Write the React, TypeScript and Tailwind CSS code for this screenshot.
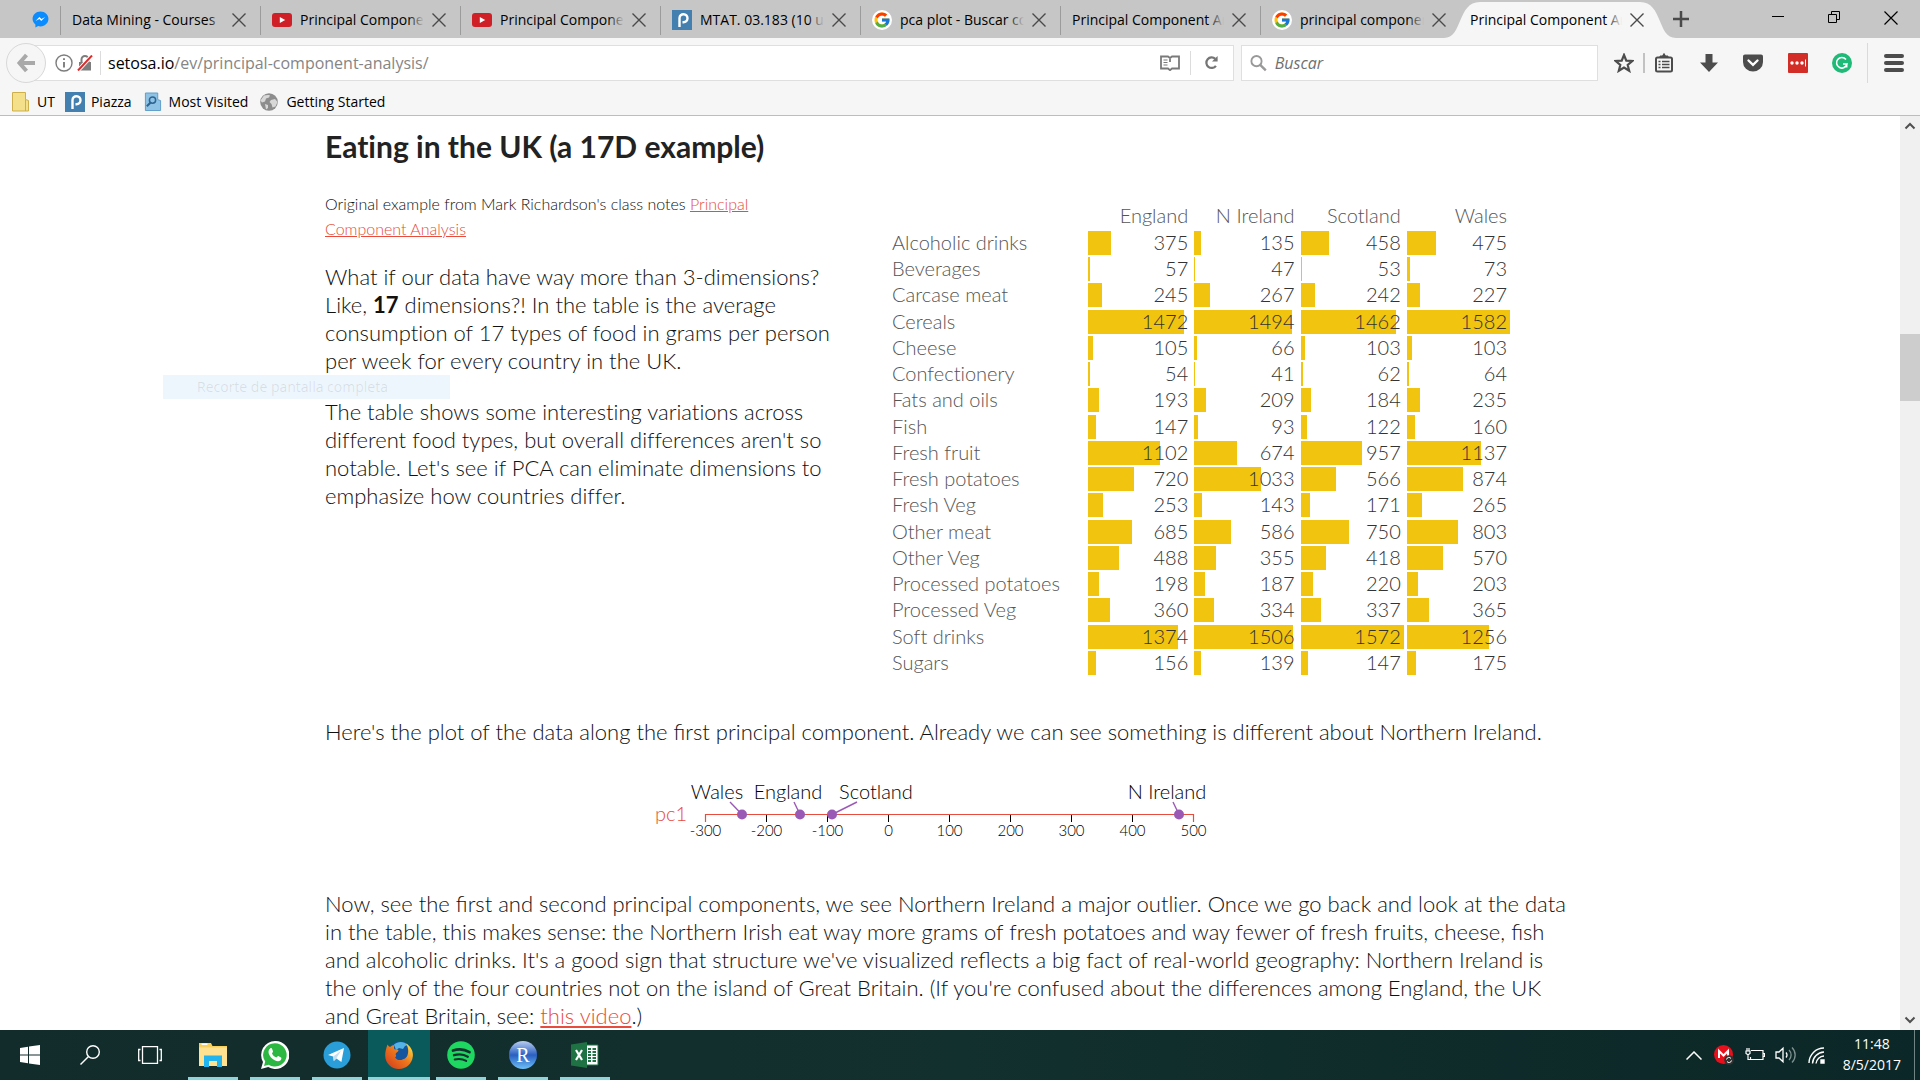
import React from "react";
import { FcGoogle } from "react-icons/fc";

const countries = ["England", "N Ireland", "Scotland", "Wales"];

const foods: [string, number[]][] = [
  ["Alcoholic drinks", [375, 135, 458, 475]],
  ["Beverages", [57, 47, 53, 73]],
  ["Carcase meat", [245, 267, 242, 227]],
  ["Cereals", [1472, 1494, 1462, 1582]],
  ["Cheese", [105, 66, 103, 103]],
  ["Confectionery", [54, 41, 62, 64]],
  ["Fats and oils", [193, 209, 184, 235]],
  ["Fish", [147, 93, 122, 160]],
  ["Fresh fruit", [1102, 674, 957, 1137]],
  ["Fresh potatoes", [720, 1033, 566, 874]],
  ["Fresh Veg", [253, 143, 171, 265]],
  ["Other meat", [685, 586, 750, 803]],
  ["Other Veg", [488, 355, 418, 570]],
  ["Processed potatoes", [198, 187, 220, 203]],
  ["Processed Veg", [360, 334, 337, 365]],
  ["Soft drinks", [1374, 1506, 1572, 1256]],
  ["Sugars", [156, 139, 147, 175]],
];

const barWidth = (v: number) => `${0.6 + ((v - 41) / 1541) * 97}%`;

function CloseX() {
  return (
    <svg viewBox="0 0 14 14" className="size-[14px]" fill="none" stroke="#4a4a4a" strokeWidth="1.4">
      <path d="M0.5 0.5 13.5 13.5M13.5 0.5 0.5 13.5" />
    </svg>
  );
}

function PiazzaIcon() {
  return (
    <svg viewBox="0 0 20 20" className="size-5 shrink-0">
      <rect width="20" height="20" fill="#4380b0" />
      <path d="M7.500 17V8a4 4 0 1 1 4 4.200h-1" fill="none" stroke="#fff" strokeWidth="2.4" />
    </svg>
  );
}

function YouTubeIcon() {
  return (
    <svg viewBox="0 0 20 20" className="size-5 shrink-0">
      <rect y="3" width="20" height="14" rx="3" fill="#cf2027" />
      <path d="M7.8 7v6l5.4-3z" fill="#fff" />
    </svg>
  );
}

function GoogleIcon() {
  return (
    <span className="flex size-5 shrink-0 items-center justify-center rounded-full bg-white">
      <FcGoogle className="size-[18px]" />
    </span>
  );
}

function MessengerIcon() {
  return (
    <svg viewBox="0 0 18 18" className="size-[17px]">
      <path d="M9 0.5C4.2.5.6 4 .6 8.300c0 2.400 1.200 4.500 3 5.900V17.600l2.900-1.600c.8.200 1.600.3 2.500.3 4.800 0 8.400-3.600 8.400-8S13.800.5 9 .5z" fill="#0a8cff" />
      <path d="m3.800 10.600 4-4.300 2.200 2.200 4-2.200-4.200 4.400-2-2.200z" fill="#fff" />
    </svg>
  );
}

type Tab = { title: string; icon?: React.ReactNode };
const tabs: Tab[] = [
  { title: "Data Mining - Courses" },
  { title: "Principal Component", icon: <YouTubeIcon /> },
  { title: "Principal Component", icon: <YouTubeIcon /> },
  { title: "MTAT. 03.183 (10 unread)", icon: <PiazzaIcon /> },
  { title: "pca plot - Buscar con", icon: <GoogleIcon /> },
  { title: "Principal Component Analysis" },
  { title: "principal component", icon: <GoogleIcon /> },
];

function TabLabel({ title, fade }: { title: string; fade: string }) {
  return (
    <span className="relative min-w-0 flex-1 overflow-hidden whitespace-nowrap text-left">
      {title}
      <span className={`absolute inset-y-0 right-0 w-4 bg-linear-to-r from-transparent ${fade}`} />
    </span>
  );
}

function TabStrip() {
  return (
    <header className="flex h-[38px] items-stretch bg-[#c6c6c6] text-sm text-black">
      <button aria-label="Messenger" className="flex w-[60px] items-center justify-center pt-px pl-5">
        <MessengerIcon />
      </button>
      {tabs.map((t, i) => (
        <div key={i} className="relative flex w-[200px] items-center gap-2 pt-[2px] pr-[14px] pl-3">
          <span className="absolute top-[6px] left-0 h-[29px] w-px bg-[#9b9b9b]" />
          {t.icon}
          <TabLabel title={t.title} fade="to-[#c6c6c6]" />
          <button aria-label="Close tab">
            <CloseX />
          </button>
        </div>
      ))}
      <div className="relative flex w-[200px] items-center gap-2 pt-[2px] pr-[16px] pl-[10px]">
        <svg viewBox="0 0 232 36" className="absolute bottom-0 -left-4 h-9 w-[232px]" preserveAspectRatio="none">
          <path d="M0 36C19 36 13 0 36 0H196C219 0 213 36 232 36z" fill="#f6f6f6" />
        </svg>
        <span className="relative flex min-w-0 flex-1">
          <TabLabel title="Principal Component Analysis" fade="to-[#f6f6f6]" />
        </span>
        <button aria-label="Close tab" className="relative">
          <CloseX />
        </button>
      </div>
      <button aria-label="New tab" className="ml-[13px] flex items-center">
        <svg viewBox="0 0 16 16" className="size-4" stroke="#4a4a4a" strokeWidth="2.500">
          <path d="M8 0v16M0 8h16" />
        </svg>
      </button>
      <div className="ml-auto flex items-start gap-[44px] pt-[11px] pr-[22px]">
        <button aria-label="Minimize">
          <svg viewBox="0 0 12 12" className="size-3" stroke="#000">
            <path d="M0 5.500h12" />
          </svg>
        </button>
        <button aria-label="Restore">
          <svg viewBox="0 0 12 12" className="size-3" fill="none" stroke="#000">
            <path d="M.5 3.500h8v8h-8zM3.500 3.500v-3h8v8h-3" />
          </svg>
        </button>
        <button aria-label="Close">
          <svg viewBox="0 0 14 14" className="size-[14px]" stroke="#000" strokeWidth="1.200">
            <path d="M.5.5l13 13M13.500.5l-13 13" />
          </svg>
        </button>
      </div>
    </header>
  );
}

function NavBar() {
  return (
    <div className="flex h-[46px] items-center bg-[#f6f6f6] pt-[3px] pr-[16px]">
      <button aria-label="Back" className="relative z-10 ml-[6px] flex size-10 shrink-0 items-center justify-center rounded-full border border-[#d8d8d8] bg-[#f6f6f6]">
        <svg viewBox="0 0 20 20" className="size-5" fill="none" stroke="#a9a9a9" strokeWidth="4">
          <path d="M10.500 2 3.500 10l7 8M4 10h15" />
        </svg>
      </button>
      <div className="-ml-3 flex h-9 flex-1 items-center border border-[#dfdfdf] bg-white pl-5">
        <svg viewBox="0 0 18 18" className="size-[18px]" fill="none" stroke="#7d7d7d" strokeWidth="1.400">
          <circle cx="9" cy="9" r="8" />
          <path d="M9 8v5.500M9 4.200v1.900" strokeWidth="1.900" />
        </svg>
        <svg viewBox="0 0 16 16" className="ml-1 size-4">
          <rect x="2" y="7" width="12" height="8.500" fill="#7d7d7d" />
          <path d="M4.500 8V4.500a3.500 3.500 0 0 1 7 0V8" fill="none" stroke="#7d7d7d" strokeWidth="2" />
          <path d="M1 15.500 15 .5" stroke="#fff" strokeWidth="4" />
          <path d="M1 15.500 15 .5" stroke="#d92d2d" strokeWidth="2" />
        </svg>
        <span className="mx-[7px] h-6 w-px bg-[#dcdcdc]" />
        <a href="http://setosa.io/ev/principal-component-analysis/" className="flex-1 text-base text-[#858585]">
          <span className="text-black">setosa.io</span>/ev/principal-component-analysis/
        </a>
        <button aria-label="Reader view">
          <svg viewBox="0 0 20 16" className="h-4 w-5" fill="none" stroke="#7a7a7a" strokeWidth="1.800">
            <path d="M1 1.500h7l2 1.500 2-1.500h7v12h-7l-2 1.700-2-1.700H1zM10 3v4" />
            <path d="M3.500 5h4M3.500 7.500h4M3.500 10h4" strokeWidth="1.200" />
          </svg>
        </button>
        <span className="mx-[10px] h-6 w-px bg-[#dcdcdc]" />
        <button aria-label="Reload" className="mx-[3px] mr-[14px]">
          <svg viewBox="0 0 16 16" className="size-[15px]" fill="none" stroke="#757575" strokeWidth="2.400">
            <path d="M12.700 11.500A5.600 5.600 0 1 1 12 4.200" />
            <path d="M14.500 1v6H8.500z" fill="#757575" stroke="none" />
          </svg>
        </button>
      </div>
      <label className="ml-[7px] flex h-9 w-[357px] items-center gap-2 border border-[#dfdfdf] bg-white pl-2">
        <svg viewBox="0 0 18 18" className="size-[18px]" fill="none" stroke="#999" strokeWidth="2">
          <circle cx="7" cy="7" r="5.500" />
          <path d="m11 11 6 6" strokeWidth="2.600" />
        </svg>
        <input aria-label="Buscar" placeholder="Buscar" className="w-full bg-transparent text-base italic outline-none placeholder:text-[#707070]" />
      </label>
      <div className="ml-4 flex items-center text-[#4c4c4c]">
        <button aria-label="Bookmark">
          <svg viewBox="0 0 20 20" className="size-5" fill="none" stroke="#4c4c4c" strokeWidth="2.200">
            <path d="m10 2 2.300 5.600 6 .4-4.600 3.900 1.500 5.900-5.200-3.300-5.200 3.300 1.500-5.900L1.700 8l6-.4z" />
          </svg>
        </button>
        <span className="mx-[9px] h-5 w-[2px] bg-[#c2c2c2]" />
        <button aria-label="Bookmarks list" className="mr-[26px]">
          <svg viewBox="0 0 20 20" className="size-5" fill="none" stroke="#4c4c4c">
            <rect x="2" y="4.500" width="16" height="14" rx="1.500" strokeWidth="2" />
            <path d="M6 4.500V3h2.500L10 .5 11.500 3H14v1.500z" fill="#4c4c4c" />
            <path d="M4.500 8.500h2M8 8.500h7.500M4.500 11.500h2M8 11.500h7.500M4.500 14.500h2M8 14.500h7.500" strokeWidth="1.500" />
          </svg>
        </button>
        <button aria-label="Downloads" className="mr-[25px]">
          <svg viewBox="0 0 18 20" className="h-5 w-[18px]" fill="#4c4c4c">
            <path d="M5.500 1h7v8.500H18L9 19 0 9.500h5.500z" />
          </svg>
        </button>
        <button aria-label="Pocket" className="mr-[25px]">
          <svg viewBox="0 0 20 20" className="size-5">
            <path d="M2 1.500h16c1.200 0 2 .8 2 2V9a10 9.500 0 0 1-20 0V3.500c0-1.200.8-2 2-2z" fill="#4c4c4c" />
            <path d="m5.500 7.500 4.500 4.300L14.500 7.500" fill="none" stroke="#fff" strokeWidth="2.400" strokeLinecap="round" />
          </svg>
        </button>
        <button aria-label="Password manager" className="mr-[24px]">
          <svg viewBox="0 0 20 20" className="size-5">
            <rect width="20" height="20" rx="1" fill="#d32d27" />
            <circle cx="4" cy="10" r="1.700" fill="#fff" />
            <circle cx="9" cy="10" r="1.700" fill="#fff" />
            <circle cx="14" cy="10" r="1.700" fill="#fff" />
            <path d="M17.500 6.500v7" stroke="#fff" />
          </svg>
        </button>
        <button aria-label="Grammar checker">
          <svg viewBox="0 0 20 20" className="size-5" fill="none">
            <circle cx="10" cy="10" r="10" fill="#1fb978" />
            <path d="M14 6.500A5.300 5.300 0 1 0 15 11h-4M14.700 11v3.500" stroke="#fff" strokeWidth="1.600" />
          </svg>
        </button>
        <span className="mr-[16px] ml-[15px] h-10 w-px bg-[#dadada]" />
        <button aria-label="Menu" className="flex flex-col gap-[3px]">
          <span className="h-1 w-5 rounded bg-[#4c4c4c]" />
          <span className="h-1 w-5 rounded bg-[#4c4c4c]" />
          <span className="h-1 w-5 rounded bg-[#4c4c4c]" />
        </button>
      </div>
    </div>
  );
}

function Bookmarks() {
  return (
    <nav className="flex h-8 items-center border-b border-[#bdbdbd] bg-[#f6f6f6] pt-1 pl-[11px] text-sm text-black">
      <a href="#ut" className="mr-[10px] flex items-center gap-[7px]">
        <svg viewBox="0 0 19 20" className="h-5 w-[19px]">
          <path d="M1.500.5h13v7l3 1v10.500h-16z" fill="#f4e08a" stroke="#cdb04b" />
          <path d="M14.500 7.500v11.500" stroke="#cdb04b" />
        </svg>
        UT
      </a>
      <a href="#piazza" className="mr-3 flex items-center gap-[6px]">
        <PiazzaIcon />
        Piazza
      </a>
      <a href="#most-visited" className="mr-3 flex items-center gap-[7px]">
        <svg viewBox="0 0 19 20" className="h-5 w-[18px]" fill="none">
          <path d="M1.500.5h13v7l3 1v10.500h-16z" fill="#8fc3e6" stroke="#5c9cc8" />
          <circle cx="9" cy="8" r="3.300" stroke="#2e6592" strokeWidth="1.600" />
          <path d="m7 10.500-4 4" stroke="#2e6592" strokeWidth="2.200" />
        </svg>
        Most Visited
      </a>
      <a href="#getting-started" className="flex items-center gap-2">
        <svg viewBox="0 0 18 18" className="size-[18px]">
          <circle cx="9" cy="9" r="8.800" fill="#8d8d8d" />
          <path d="M4 2.500c2 0 4-1 6 0l-1 2-3 1-1 3-3 1-1.500-2zM11 7l4-1 2.500 3-2 4.500-3 1-1-3.500-2-2zM5 11l3 1 0 3-2 1.500z" fill="#d8d8d8" />
        </svg>
        Getting Started
      </a>
    </nav>
  );
}

function FoodTable() {
  return (
    <table className="h-[474px] w-[621px] table-fixed border-collapse text-xl leading-[22px] text-[#333]">
      <thead>
        <tr className="h-7">
          <th className="w-[196px]" />
          {countries.map((c) => (
            <th key={c} scope="col" className="p-0 pr-[6px] text-right align-top leading-6 font-light text-[#555]">
              {c}
            </th>
          ))}
        </tr>
      </thead>
      <tbody>
        {foods.map(([name, values]) => (
          <tr key={name}>
            <th scope="row" className="p-0 text-left align-top font-light text-[#555]">
              {name}
            </th>
            {values.map((v, i) => (
              <td key={i} className="p-0 align-top">
                <div className="relative h-6 pr-[6px] text-right">
                  <div className="absolute inset-y-0 left-0 bg-[#f1c40f]" style={{ width: barWidth(v) }} />
                  <span className="relative">{v}</span>
                </div>
              </td>
            ))}
          </tr>
        ))}
      </tbody>
    </table>
  );
}

const points = [
  { name: "Wales", x: 92, tx: 67, lx: 80 },
  { name: "England", x: 150, tx: 138, lx: 144 },
  { name: "Scotland", x: 182, tx: 226, lx: 207 },
  { name: "N Ireland", x: 529, tx: 517, lx: 523 },
];

function PcPlot() {
  return (
    <svg viewBox="0 0 570 70" className="ml-[325px] h-[70px] w-[570px]" role="img" aria-label="First principal component">
      <text x="37" y="41" textAnchor="end" fontSize="20" fill="#e74c3c">pc1</text>
      {[-200, -100, 0, 100, 200, 300, 400].map((t) => (
        <path key={t} d={`M${238.5 + t * 0.61} 34v8`} stroke="#000" />
      ))}
      <path d="M55.500 42v-7.500h488V42" fill="none" stroke="#e74c3c" strokeWidth="1.200" />
      {[-300, -200, -100, 0, 100, 200, 300, 400, 500].map((t) => (
        <text key={t} x={238.5 + t * 0.61} y="56" textAnchor="middle" fontSize="15" fill="#000">{t}</text>
      ))}
      {points.map((p) => (
        <g key={p.name}>
          <path d={`M${p.lx} 22L${p.x} 34.500`} stroke="#9b59b6" strokeWidth="1.400" />
          <circle cx={p.x} cy="34.500" r="5" fill="#9b59b6" />
          <text x={p.tx} y="19" textAnchor="middle" fontSize="20" fill="#000">{p.name}</text>
        </g>
      ))}
    </svg>
  );
}

function Article() {
  return (
    <article className="ml-[325px] max-w-[1250px] font-[Lato,sans-serif] text-[22px] leading-7 font-light text-[#111]">
      <div className="[font-variant-ligatures:no-common-ligatures]">
        <h1 className="pt-3 text-[30px] leading-9 font-bold text-[#222]">Eating in the UK (a 17D example)</h1>
        <div className="flex">
          <div className="w-[508px] pt-[27px]">
            <p className="w-[440px] text-base leading-[25px]">
              Original example from Mark Richardson's class notes{" "}
              <a href="#notes" className="text-[#e74c3c] underline">Principal Component Analysis</a>
            </p>
            <p className="mt-[22px]">
              What if our data have way more than 3-dimensions? Like, <b className="font-bold">17</b> dimensions?! In the table is the average consumption of 17 types of food in grams per person per week for every country in the UK.
            </p>
            <p className="mt-[23px]">
              The table shows some interesting variations across different food types, but overall differences aren't so notable. Let's see if PCA can eliminate dimensions to emphasize how countries differ.
            </p>
          </div>
          <div className="ml-[59px] pt-[39px]">
            <FoodTable />
          </div>
        </div>
      </div>
      <p className="mt-[41px] mb-[34px]">
        Here's the plot of the data along the first principal component. Already we can see something is different about Northern Ireland.
      </p>
      <PcPlot />
      <p className="mt-[40px]">
        Now, see the first and second principal components, we see Northern Ireland a major outlier. Once we go back and look at the data in the table, this makes sense: the Northern Irish eat way more grams of fresh potatoes and way fewer of fresh fruits, cheese, fish and alcoholic drinks. It's a good sign that structure we've visualized reflects a big fact of real-world geography: Northern Ireland is the only of the four countries not on the island of Great Britain. (If you're confused about the differences among England, the UK and Great Britain, see:{" "}
        <a href="#video" className="text-[#e74c3c] underline">this video</a>.)
      </p>
    </article>
  );
}

function ScrollBar() {
  return (
    <div className="flex w-5 shrink-0 flex-col items-center bg-[#f0f0f0]">
      <svg viewBox="0 0 20 20" className="size-5" fill="none" stroke="#505050" strokeWidth="2">
        <path d="m5.500 12.500 4.500-4.500 4.500 4.500" />
      </svg>
      <div className="mt-[198px] h-[67px] w-full bg-[#cdcdcd]" />
      <svg viewBox="0 0 20 20" className="mt-auto size-5" fill="none" stroke="#505050" strokeWidth="2">
        <path d="m5.500 7.500 4.500 4.500 4.500-4.500" />
      </svg>
    </div>
  );
}

const apps: { name: string; active?: boolean; icon: React.ReactNode }[] = [
  {
    name: "File Explorer",
    icon: (
      <svg viewBox="0 0 28 28" className="size-7">
        <path d="M0 2h12l1.500 3H28v20H0z" fill="#f7cf5b" />
        <path d="M2.500 3.200h6" stroke="#fff" strokeWidth="1.500" />
        <path d="M0 6.500h28V25H0z" fill="#ffe291" />
        <path d="M5 26V14.500h18V26h-5v-6h-8v6z" fill="#22b4ee" />
      </svg>
    ),
  },
  {
    name: "WhatsApp",
    icon: (
      <svg viewBox="0 0 28 28" className="size-7">
        <path d="M14 0a14 14 0 0 0-12 21L0 28l7.200-2A14 14 0 1 0 14 0z" fill="#fff" />
        <path d="M14 2.200A11.700 11.700 0 0 0 4.200 20.500L3 25l4.700-1.200A11.700 11.700 0 1 0 14 2.200z" fill="#2cb742" />
        <path d="M9.200 7.500c1-.8 1.600-.3 2 .8l.8 2c.3.800-1 1.600-1 2.100.8 1.900 2.400 3.300 4.300 4 .6.200 1.300-1.500 2-1.300l2.700 1.300c.8.400.3 2.200-.6 3-2.500 1.900-6.500-.2-8.600-2.200-2.600-2.600-5-7-1.600-9.700z" fill="#fff" />
      </svg>
    ),
  },
  {
    name: "Telegram",
    icon: (
      <svg viewBox="0 0 28 28" className="size-7">
        <circle cx="14" cy="14" r="13.500" fill="#2a9ed8" />
        <path d="m5 14 16-7-2.600 14-5-3.600-2.600 2.600-.6-4.500z" fill="#fff" />
        <path d="m10.200 15.500 8-6-5 8-2.400 2.500z" fill="#c5dfee" />
      </svg>
    ),
  },
  {
    name: "Firefox",
    active: true,
    icon: (
      <svg viewBox="0 0 28 28" className="size-7">
        <defs>
          <linearGradient id="fox" x1="0" y1="1" x2="1" y2="0">
            <stop offset="0" stopColor="#d2361c" />
            <stop offset=".55" stopColor="#ee7a1c" />
            <stop offset="1" stopColor="#fff04a" />
          </linearGradient>
        </defs>
        <circle cx="15" cy="12" r="11.500" fill="#14559f" />
        <path d="M9 3.500c4-3.500 10-3.500 14 .5l-3 1-2 3-4-1-3 2z" fill="#55b4e6" />
        <path d="M21 2.500c5 3 7.500 8 6.800 13C27 23 21 28 14 28 6 28 .2 22 .2 14.500c0-4 1-7 2.300-11C3.500 5 4 5.500 5 6c1.500-1.300 3-1.700 4.500-1.700C9 5.500 8.700 7 9.500 8.300c1.800.2 3.500.2 4 1.200-.5 1.500-2.500 2-3 3.700 1 1 .8 2.500-.5 3 2 3.500 5.500 3.300 8 2 2.500-.5 3.500-2 4.500-4 1.500-4 .5-8.500-1.500-11.700z" fill="url(#fox)" />
      </svg>
    ),
  },
  {
    name: "Spotify",
    icon: (
      <svg viewBox="0 0 28 28" className="size-7" fill="none" stroke="#12302e" strokeLinecap="round">
        <circle cx="14" cy="14" r="13.800" fill="#1ed760" stroke="none" />
        <path d="M6 9.500c5.500-1.700 12-1 16.500 1.700" strokeWidth="2.700" />
        <path d="M7 14.200c4.700-1.400 10-.8 13.800 1.500" strokeWidth="2.300" />
        <path d="M7.700 18.500c4-1 8-.6 11.500 1.400" strokeWidth="2" />
      </svg>
    ),
  },
  {
    name: "RStudio",
    icon: (
      <span className="flex size-7 items-center justify-center rounded-full bg-linear-to-b from-[#b9cdf0] via-[#2b5fc0] to-[#6fc0f8] font-['Liberation_Serif',serif] text-xl leading-none text-white">
        R
      </span>
    ),
  },
  {
    name: "Excel",
    icon: (
      <svg viewBox="0 0 28 28" className="size-7">
        <path d="M14 4h13v20H14z" fill="#fff" stroke="#1f7244" />
        <path d="M17 8h3M21.500 8h3.500M17 11h3M21.500 11h3.500M17 14h3M21.500 14h3.500M17 17h3M21.500 17h3.500M17 20h3M21.500 20h3.500" stroke="#1f7244" strokeWidth="2" />
        <path d="M0 3.500 16 1v26L0 24.500z" fill="#1f7244" />
        <path d="m5 9 6 10M11 9 5 19" stroke="#fff" strokeWidth="2.200" />
      </svg>
    ),
  },
];

function Taskbar() {
  return (
    <footer className="flex h-[50px] items-stretch bg-linear-to-r from-[#122c2b] via-[#12302e] to-[#0b2727] text-white">
      <button aria-label="Start" className="flex w-[60px] items-center justify-center">
        <svg viewBox="0 0 20 20" className="size-5" fill="#fff">
          <path d="M0 3l8-1.200v7.700H0zM9 1.600 20 0v9.500H9zM0 10.500h8v7.700L0 17zM9 10.500h11V20L9 18.400z" />
        </svg>
      </button>
      <button aria-label="Search" className="flex w-[60px] items-center justify-center">
        <svg viewBox="0 0 20 20" className="size-5" fill="none" stroke="#fff" strokeWidth="1.400">
          <circle cx="13" cy="7" r="6.300" />
          <path d="M8.500 11.500.5 19.500" />
        </svg>
      </button>
      <button aria-label="Task view" className="flex w-[60px] items-center justify-center">
        <svg viewBox="0 0 24 18" className="h-[18px] w-6" fill="none" stroke="#fff" strokeWidth="1.300">
          <path d="M4.500.7h15v16.600h-15zM2.500 3.500H.7v11h1.800M21.500 3.500h1.800v11h-1.800" />
        </svg>
      </button>
      <div className="ml-[2px] flex">
        {apps.map((a) => (
          <button
            key={a.name}
            aria-label={a.name}
            className={`relative flex w-[62px] items-center justify-center ${a.active ? "bg-[#0b5a5b]" : ""}`}
          >
            {a.icon}
            <span className={`absolute bottom-0 h-[3px] bg-[#8ed4da] ${a.active ? "inset-x-0" : "inset-x-[6px]"}`} />
          </button>
        ))}
      </div>
      <div className="ml-auto flex items-center">
        <svg viewBox="0 0 16 9" className="mr-3 h-[9px] w-4" fill="none" stroke="#fff" strokeWidth="1.500">
          <path d="m.5 8.500 7.500-7.500 7.500 7.500" />
        </svg>
        <svg viewBox="0 0 20 20" className="mr-[11px] size-5">
          <circle cx="9.500" cy="9.500" r="9.500" fill="#e8101c" />
          <path d="M5 13V6l4.500 4.500L14 6v7" fill="none" stroke="#fff" strokeWidth="2" />
          <circle cx="15" cy="15" r="4.800" fill="#333" />
          <path d="M12.500 14.500a2.500 2.500 0 0 1 4.500-1M17.500 15.500a2.500 2.500 0 0 1-4.500 1" fill="none" stroke="#fff" />
        </svg>
        <svg viewBox="0 0 20 16" className="mr-[10px] h-4 w-5" fill="none" stroke="#fff" strokeWidth="1.200">
          <path d="M6 3.500h12v9H5.500V10M18.500 6.500h1v3h-1M2 1v3M4 1v3M1 4h4v2.500l-2 1.200-2-1.200zM3 8v4.500h2.500" />
        </svg>
        <svg viewBox="0 0 21 18" className="mr-3 h-[18px] w-[21px]" fill="none" stroke="#fff" strokeWidth="1.300">
          <path d="M1 6h3l4-3.800v13.600L4 12H1zM11 6.500a4 4 0 0 1 0 5" />
          <path d="M14 4a7 7 0 0 1 0 10M17 1.500a10.500 10.500 0 0 1 0 15" stroke="#7d9291" />
        </svg>
        <svg viewBox="0 0 17 17" className="mr-[18px] size-[17px]" fill="none" stroke="#fff" strokeWidth="1.400">
          <path d="M1 16A15 15 0 0 1 16 1" />
          <path d="M4.500 16.500A12 12 0 0 1 16 5M8 16.500A8.500 8.500 0 0 1 16 9" />
          <path d="M13 13h3v3h-3z" fill="#fff" />
        </svg>
        <div className="mr-[13px] pb-[2px] text-center text-sm leading-[21px]">
          11:48
          <br />
          8/5/2017
        </div>
        <span className="mr-[5px] h-full w-px bg-[#6f8483]" />
      </div>
    </footer>
  );
}

export default function App() {
  return (
    <div className="flex h-screen flex-col overflow-hidden bg-white font-['Open_Sans','Noto_Sans',sans-serif]">
      <TabStrip />
      <NavBar />
      <Bookmarks />
      <main className="relative flex min-h-0 flex-1 justify-between">
        <div className="min-w-0 flex-1 overflow-hidden">
          <Article />
        </div>
        <div className="absolute top-[259px] left-[163px] flex h-6 w-[287px] items-center bg-[#cfe6fa]/35 pl-[34px] text-sm text-black/10">
          Recorte de pantalla completa
        </div>
        <ScrollBar />
      </main>
      <Taskbar />
    </div>
  );
}
